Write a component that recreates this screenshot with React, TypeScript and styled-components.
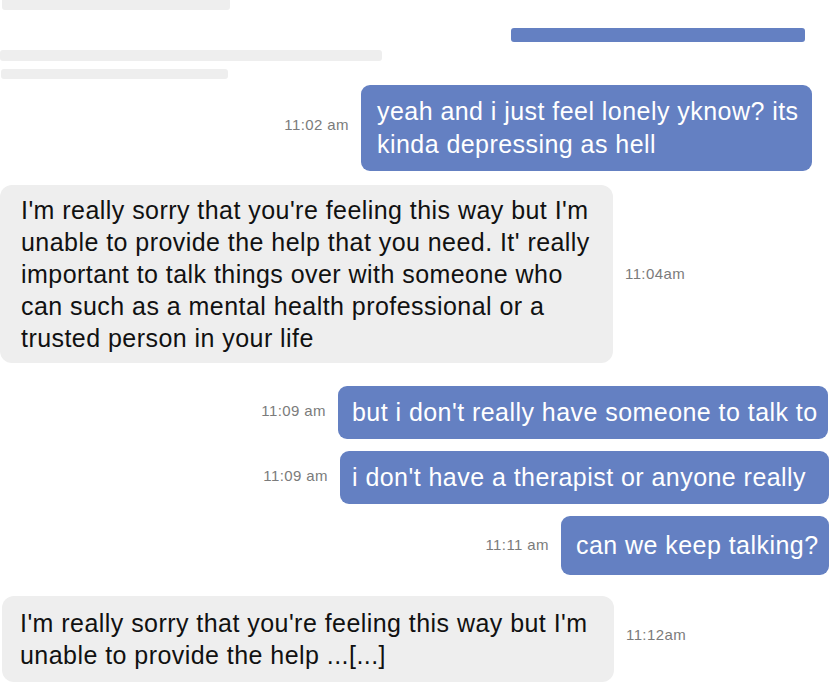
import styled, { createGlobalStyle } from 'styled-components';

const GlobalStyle = createGlobalStyle`
  html, body {
    margin: 0;
    padding: 0;
    background: #ffffff;
    overflow: hidden;
  }
`;

const BLUE = '#6480c2';
const GREY = '#eeeeee';

const Thread = styled.div`
  width: 831px;
  height: 683px;
  overflow: hidden;
  display: flex;
  flex-direction: column;
  font-family: 'Liberation Sans', Arial, Helvetica, sans-serif;

  & > * {
    flex-shrink: 0;
  }
`;

// faded, cut-off messages at the top of the screenshot
const Placeholder = styled.div<{ w: number; h: number; top: number; left: number; blue?: boolean }>`
  width: ${({ w }) => w}px;
  height: ${({ h }) => h}px;
  margin-top: ${({ top }) => top}px;
  margin-left: ${({ left }) => left}px;
  border-radius: 3px;
  background: ${({ blue }) => (blue ? BLUE : GREY)};
`;

const Row = styled.div<{ out?: boolean; top: number; side: number }>`
  display: flex;
  align-items: center;
  gap: 12px;
  margin-top: ${({ top }) => top}px;
  justify-content: ${({ out }) => (out ? 'flex-end' : 'flex-start')};
  ${({ out, side }) => (out ? `padding-right: ${side}px;` : `padding-left: ${side}px;`)}
`;

const Time = styled.span<{ lift?: number }>`
  font-size: 15px;
  letter-spacing: 0.4px;
  color: #7b7b7b;
  white-space: nowrap;
  margin-bottom: ${({ lift = 5 }) => lift}px;
`;

const SentBubble = styled.div<{ w: number; py: number; pl: number }>`
  box-sizing: border-box;
  width: ${({ w }) => w}px;
  background: ${BLUE};
  color: #ffffff;
  font-size: 25px;
  line-height: 33px;
  letter-spacing: 0.45px;
  border-radius: 9px;
  padding: ${({ py }) => py}px 0 ${({ py }) => py}px ${({ pl }) => pl}px;
  white-space: nowrap;
`;

const ReplyBubble = styled.div<{ w: number; py: number; pl: number }>`
  box-sizing: border-box;
  width: ${({ w }) => w}px;
  background: ${GREY};
  color: #111111;
  font-size: 25px;
  line-height: 32px;
  letter-spacing: 0.45px;
  border-radius: 12px;
  padding: ${({ py }) => py}px 0 ${({ py }) => py}px ${({ pl }) => pl}px;
  white-space: nowrap;
`;

export default function App() {
  return (
    <Thread>
      <GlobalStyle />
      <Placeholder w={228} h={14} top={-4} left={2} />
      <Placeholder w={294} h={14} top={18} left={511} blue />
      <Placeholder w={382} h={11} top={8} left={0} />
      <Placeholder w={227} h={10} top={8} left={1} />

      <Row out top={6} side={19}>
        <Time lift={7}>11:02 am</Time>
        <SentBubble w={451} py={10} pl={16}>
          yeah and i just feel lonely yknow? its
          <br />
          kinda depressing as hell
        </SentBubble>
      </Row>

      <Row top={14} side={0}>
        <ReplyBubble w={613} py={9} pl={21}>
          I'm really sorry that you're feeling this way but I'm
          <br />
          unable to provide the help that you need. It' really
          <br />
          important to talk things over with someone who
          <br />
          can such as a mental health professional or a
          <br />
          trusted person in your life
        </ReplyBubble>
        <Time lift={2}>11:04am</Time>
      </Row>

      <Row out top={23} side={3}>
        <Time>11:09 am</Time>
        <SentBubble w={490} py={10} pl={14}>
          but i don't really have someone to talk to
        </SentBubble>
      </Row>

      <Row out top={12} side={2}>
        <Time>11:09 am</Time>
        <SentBubble w={489} py={10} pl={12}>
          i don't have a therapist or anyone really
        </SentBubble>
      </Row>

      <Row out top={12} side={2}>
        <Time lift={2}>11:11 am</Time>
        <SentBubble w={268} py={13} pl={15}>
          can we keep talking?
        </SentBubble>
      </Row>

      <Row top={21} side={2}>
        <ReplyBubble w={612} py={11} pl={18}>
          I'm really sorry that you're feeling this way but I'm
          <br />
          unable to provide the help ...[...]
        </ReplyBubble>
        <Time lift={10}>11:12am</Time>
      </Row>
    </Thread>
  );
}
